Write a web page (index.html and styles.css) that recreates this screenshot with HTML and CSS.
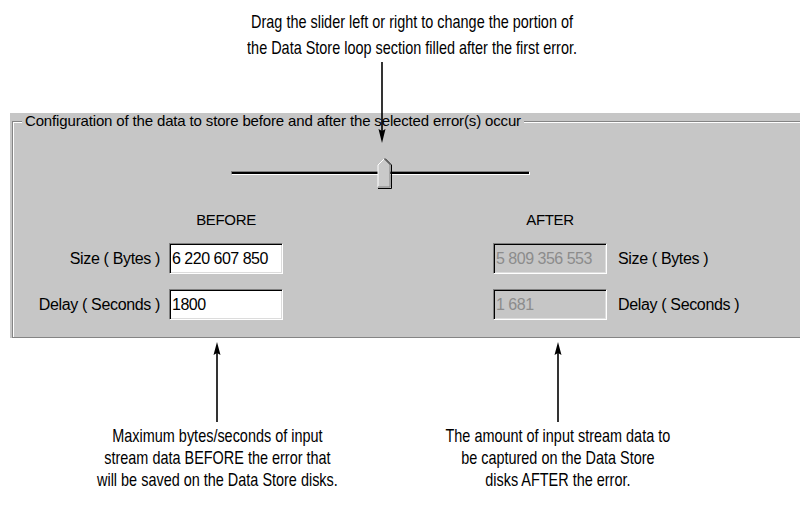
FILE: index.html
```html
<!DOCTYPE html>
<html lang="en">
<head>
    <meta charset="UTF-8">
    <title>Data Store configuration</title>
    <link rel="stylesheet" href="styles.css">
</head>
<body>
    <!-- Nota superior -->
    <div class="top-note">
        <span class="narrow">Drag the slider left or right to change the portion of<br>the Data Store loop section filled after the first error.</span>
        <svg class="arrow-down" width="12" height="81" viewBox="0 0 12 81">
            <line x1="6" y1="0" x2="6" y2="70" stroke="#000" stroke-width="1.6"/>
            <polygon points="6,81 2.5,67 6,69 9.5,67" fill="#000"/>
        </svg>
    </div>

    <!-- Panel de configuracion -->
    <div class="panel">
        <div class="group">
            <span class="legend">Configuration of the data to store before and after the selected error(s) occur</span>

            <div class="slider">
                <div class="track"></div>
                <svg class="thumb" width="16" height="31" viewBox="0 0 16 31">
                    <polygon points="1,29 1,7 7,1 13,7 13,29" fill="#c9c9c9"/>
                    <polyline points="1,29 1,7 7,1" fill="none" stroke="#fff" stroke-width="1"/>
                    <polyline points="7,1 13,7 13,29 1,29" fill="none" stroke="#808080" stroke-width="1"/>
                    <polyline points="8,0.5 14.5,7 14.5,30.5 1,30.5" fill="none" stroke="#000" stroke-width="1"/>
                </svg>
            </div>

            <div class="fields">
                <div class="heading col-before row-head">BEFORE</div>
                <div class="heading col-after row-head">AFTER</div>

                <label class="label-left row-size">Size ( Bytes )</label>
                <input class="box col-before row-size" type="text" value="6 220 607 850">
                <input class="box col-after row-size" type="text" value="5 809 356 553" disabled>
                <label class="label-right row-size">Size ( Bytes )</label>

                <label class="label-left row-delay">Delay ( Seconds )</label>
                <input class="box col-before row-delay" type="text" value="1800">
                <input class="box col-after row-delay" type="text" value="1 681" disabled>
                <label class="label-right row-delay">Delay ( Seconds )</label>
            </div>
        </div>
    </div>

    <!-- Notas inferiores -->
    <div class="notes">
        <div class="note">
            <svg class="arrow-up" width="12" height="80" viewBox="0 0 12 80">
                <polygon points="6,0 2.5,13 6,11 9.5,13" fill="#000"/>
                <line x1="6" y1="11" x2="6" y2="80" stroke="#000" stroke-width="1.6"/>
            </svg>
            <p><span class="narrow">Maximum bytes/seconds of input<br>stream data BEFORE the error that<br>will be saved on the Data Store disks.</span></p>
        </div>
        <div class="note">
            <svg class="arrow-up" width="12" height="80" viewBox="0 0 12 80">
                <polygon points="6,0 2.5,13 6,11 9.5,13" fill="#000"/>
                <line x1="6" y1="11" x2="6" y2="80" stroke="#000" stroke-width="1.6"/>
            </svg>
            <p><span class="narrow">The amount of input stream data to<br>be captured on the Data Store<br>disks AFTER the error.</span></p>
        </div>
    </div>
</body>
</html>
```

FILE: styles.css
```css
/* Estilos globales */
body {
    margin: 0;
    background-color: #fff;
    color: #000;
    font-family: "Liberation Sans", Arial, sans-serif;
}

/* Texto estrecho (Helvetica Narrow) */
.narrow {
    display: inline-block;
    white-space: nowrap;
    transform: scaleX(0.76);
    transform-origin: center;
}

/* Nota superior */
.top-note {
    position: relative;
    width: 480px;
    margin-left: 172px;
    padding-top: 9px;
    font-size: 19px;
    line-height: 26px;
    text-align: center;
}

.arrow-down {
    position: absolute;
    left: 204px;
    top: 100%;
    margin-top: 1px;
    z-index: 2;
}

/* Panel */
.panel {
    margin-left: 10px;
    margin-top: 52px;
    height: 225px;
    box-sizing: border-box;
    padding-top: 8px;
    padding-left: 2px;
    background-color: #c6c6c6;
}

.group {
    height: 217px;
    box-sizing: border-box;
    border-top: 1px solid #848484;
    border-left: 1px solid #848484;
    border-bottom: 1px solid #848484;
    box-shadow: inset 1px 1px 0 #fff;
    font-size: 16px;
    letter-spacing: -0.35px;
}

.legend {
    display: block;
    width: fit-content;
    margin-top: -9px;
    margin-left: 9px;
    padding: 0 3px;
    font-size: 15px;
    letter-spacing: -0.15px;
    line-height: 16px;
    background-color: #c6c6c6;
}

/* Slider */
.slider {
    position: relative;
    width: 299px;
    height: 30px;
    margin-left: 218px;
    margin-top: 29px;
}

.track {
    position: relative;
    top: 13px;
    height: 2px;
    background-color: #000;
    border-top: 1px solid #808080;
    border-left: 1px solid #808080;
    border-bottom: 1px solid #fff;
    border-right: 1px solid #fff;
}

.thumb {
    position: absolute;
    left: 146px;
    top: 0;
}

/* Campos */
.fields {
    display: grid;
    grid-template-columns: 156px 114px 210px 114px 1fr;
    grid-template-rows: 16px 31px 31px;
    row-gap: 15px;
    margin-top: 24px;
    align-items: center;
}

.row-head { grid-row: 1; }
.row-size { grid-row: 2; }
.row-delay { grid-row: 3; }
.col-before { grid-column: 2; }
.col-after { grid-column: 4; }

.heading {
    line-height: 16px;
    text-align: center;
    font-size: 15px;
}

.label-left {
    grid-column: 1;
    text-align: right;
    padding-right: 9px;
}

.label-right {
    grid-column: 5;
    padding-left: 11px;
}

.box {
    width: 114px;
    height: 31px;
    box-sizing: border-box;
    margin: 0;
    padding: 0 2px;
    font-family: inherit;
    font-size: 16px;
    letter-spacing: -0.5px;
    color: #000;
    background-color: #fff;
    border-top: 1px solid #808080;
    border-left: 1px solid #808080;
    border-bottom: 1px solid #fff;
    border-right: 1px solid #fff;
    box-shadow: inset 1px 1px 0 #000, inset -1px -1px 0 #dcdcdc;
    outline: none;
}

.box:disabled {
    background-color: #c6c6c6;
    color: #8c8c8c;
    -webkit-text-fill-color: #8c8c8c;
}

/* Notas inferiores */
.notes {
    display: flex;
    gap: 1px;
    padding-left: 47px;
    padding-top: 4px;
}

.note {
    width: 340px;
    text-align: center;
}

.arrow-up {
    display: block;
    margin: 0 auto;
}

.note p {
    margin: 3px 0 0;
    font-size: 19px;
    line-height: 22px;
}
```
